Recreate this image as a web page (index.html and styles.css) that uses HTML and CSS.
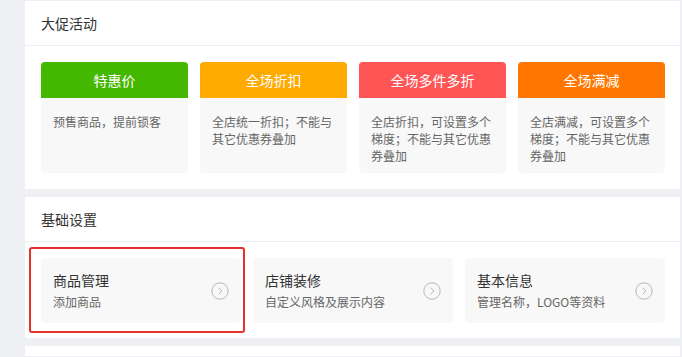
FILE: index.html
```html
<!DOCTYPE html>
<html lang="zh-CN">
<head>
    <meta charset="UTF-8">
    <meta name="viewport" content="width=device-width, initial-scale=1.0">
    <title>店铺设置</title>
    <link rel="stylesheet" href="styles.css">
</head>
<body>

<div class="panel">
    <div class="panel-head">大促活动</div>
    <div class="panel-body promo-list">
        <div class="promo">
            <div class="promo-title green">特惠价</div>
            <div class="promo-desc">预售商品，提前锁客</div>
        </div>
        <div class="promo">
            <div class="promo-title amber">全场折扣</div>
            <div class="promo-desc">全店统一折扣；不能与其它优惠券叠加</div>
        </div>
        <div class="promo">
            <div class="promo-title red">全场多件多折</div>
            <div class="promo-desc">全店折扣，可设置多个梯度；不能与其它优惠券叠加</div>
        </div>
        <div class="promo">
            <div class="promo-title orange">全场满减</div>
            <div class="promo-desc">全店满减，可设置多个梯度；不能与其它优惠券叠加</div>
        </div>
    </div>
</div>

<div class="panel">
    <div class="panel-head">基础设置</div>
    <div class="panel-body setting-list">
        <div class="setting selected">
            <div class="setting-text">
                <div class="setting-name">商品管理</div>
                <div class="setting-sub">添加商品</div>
            </div>
            <svg class="arrow" viewBox="0 0 18 18"><circle cx="9" cy="9" r="8.2"/><path d="M7.6 5.6 L10.8 9 L7.6 12.4"/></svg>
        </div>
        <div class="setting">
            <div class="setting-text">
                <div class="setting-name">店铺装修</div>
                <div class="setting-sub">自定义风格及展示内容</div>
            </div>
            <svg class="arrow" viewBox="0 0 18 18"><circle cx="9" cy="9" r="8.2"/><path d="M7.6 5.6 L10.8 9 L7.6 12.4"/></svg>
        </div>
        <div class="setting">
            <div class="setting-text">
                <div class="setting-name">基本信息</div>
                <div class="setting-sub">管理名称，LOGO等资料</div>
            </div>
            <svg class="arrow" viewBox="0 0 18 18"><circle cx="9" cy="9" r="8.2"/><path d="M7.6 5.6 L10.8 9 L7.6 12.4"/></svg>
        </div>
    </div>
</div>

<div class="panel last"></div>

</body>
</html>
```

FILE: styles.css
```css
body {
    font-family: "Noto Sans CJK SC", "Noto Sans", sans-serif;
    margin: 0;
    padding: 1px 2px 0 25px;
    background-color: #eff0f3;
    color: #333;
    overflow: hidden;
}
.panel {
    background-color: #fff;
    margin-bottom: 8px;
}
.panel.last {
    height: 10px;
    margin-bottom: 0;
}
.panel-head {
    height: 44px;
    line-height: 44px;
    padding: 0 16px;
    font-size: 14px;
    color: #333;
    border-bottom: 1px solid #eceef1;
}
.panel-body {
    padding: 16px 14px 16px 16px;
}
.promo-list {
    display: flex;
    gap: 12px;
}
.promo {
    width: 147px;
    height: 111px;
    border-radius: 4px;
    overflow: hidden;
    background-color: #f8f8f8;
}
.promo-title {
    height: 36px;
    line-height: 36px;
    text-align: center;
    color: #fff;
    font-size: 14px;
}
.promo-title.green {
    background-color: #44b700;
}
.promo-title.amber {
    background-color: #ffaa00;
}
.promo-title.red {
    background-color: #ff5555;
}
.promo-title.orange {
    background-color: #ff7700;
}
.promo-desc {
    padding: 15px 12px 0 12px;
    font-size: 12px;
    line-height: 17px;
    color: #666;
}
.setting-list {
    display: flex;
    gap: 12px;
    padding-bottom: 15px;
}
.setting {
    position: relative;
    width: 200px;
    height: 65px;
    box-sizing: border-box;
    padding: 0 12px;
    border-radius: 4px;
    background-color: #f8f8f8;
    display: flex;
    align-items: center;
    justify-content: space-between;
}
.setting.selected::after {
    content: "";
    position: absolute;
    left: -12px;
    top: -11px;
    width: 216px;
    height: 86px;
    box-sizing: border-box;
    border: 2.5px solid #e5302b;
    border-radius: 3px;
}
.setting-name {
    font-size: 14px;
    line-height: 20px;
    color: #333;
}
.setting-sub {
    margin-top: 2px;
    font-size: 12px;
    line-height: 20px;
    color: #666;
}
.arrow {
    width: 18px;
    height: 18px;
    fill: none;
    stroke: #b8b8b8;
    stroke-width: 1;
}
```
